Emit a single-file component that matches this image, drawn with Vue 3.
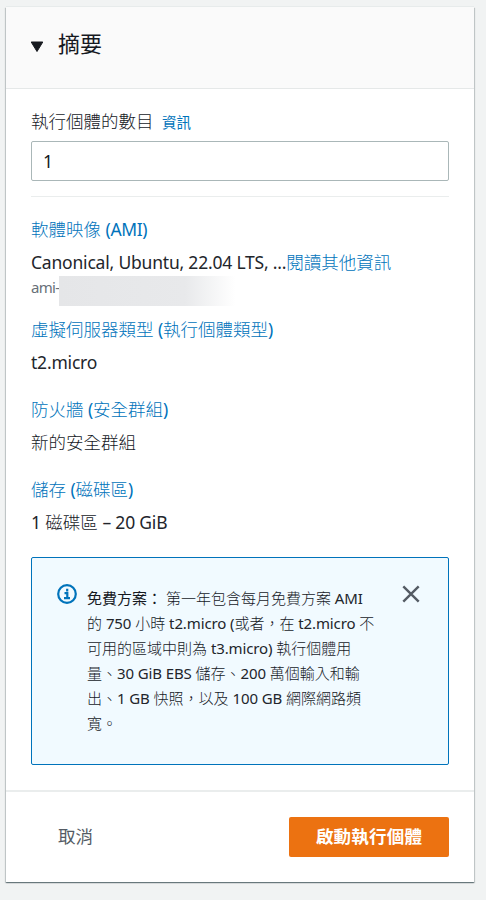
<script setup>
import { ref } from 'vue'

const count = ref('1')
</script>

<template>
  <main class="page">
    <section class="card">
      <header class="head">
        <svg class="caret" width="14" height="12" viewBox="0 0 14 12"><path d="M1.2 1h11.6L7 10.5z" fill="#16191f" stroke="#16191f" stroke-linejoin="round" /></svg>
        <h2>摘要</h2>
      </header>

      <div class="body">
        <div class="label">執行個體的數目 <a class="info">資訊</a></div>
        <input v-model="count" class="field" type="text" />
        <div class="rule"></div>

        <div class="group ami">
          <a class="title">軟體映像 <b>(AMI)</b></a>
          <div class="value"><span class="en">Canonical, Ubuntu, 22.04 LTS, ...</span><a>閱讀其他資訊</a></div>
          <div class="id"><span class="prefix">ami-</span><span class="mask"></span></div>
        </div>
        <div class="group">
          <a class="title">虛擬伺服器類型 <b>(</b>執行個體類型<b>)</b></a>
          <div class="value"><span class="en">t2.micro</span></div>
        </div>
        <div class="group">
          <a class="title">防火牆 <b>(</b>安全群組<b>)</b></a>
          <div class="value">新的安全群組</div>
        </div>
        <div class="group">
          <a class="title">儲存 <b>(</b>磁碟區<b>)</b></a>
          <div class="value"><span class="en">1</span> 磁碟區 <span class="en">– 20 GiB</span></div>
        </div>

        <div class="alert">
          <svg class="icon" width="20" height="20" viewBox="0 0 20 20" fill="none" stroke="#0073bb">
            <circle cx="10" cy="10" r="8.8" stroke-width="2.2" />
            <path d="M10.2 4.8v2.6M7.5 9.2h2.8v5M7 14.2h6" stroke-width="2.2" />
          </svg>
          <p class="text">
            <span class="line"><strong>免費方案：</strong> 第一年包含每月免費方案 <i>AMI</i></span>
            <span class="line">的 <i>750</i> 小時 <i>t2.micro (</i>或者，在 <i>t2.micro</i> 不</span>
            <span class="line">可用的區域中則為 <i>t3.micro)</i> 執行個體用</span>
            <span class="line">量、<i>30 GiB EBS</i> 儲存、<i>200</i> 萬個輸入和輸</span>
            <span class="line">出、<i>1 GB</i> 快照，以及 <i>100 GB</i> 網際網路頻</span>
            <span class="line">寬。</span>
          </p>
          <svg class="close" width="18" height="18" viewBox="0 0 18 18" fill="none" stroke="#545b64" stroke-width="2.4"><path d="M1.3 1.3l15.4 15.4M16.7 1.3L1.3 16.7" /></svg>
        </div>
      </div>

      <footer class="foot">
        <button class="cancel">取消</button>
        <button class="launch">啟動執行個體</button>
      </footer>
    </section>
  </main>
</template>

<style>
body {
  background: #f2f3f3;
}
</style>

<style scoped>
.page {
  box-sizing: border-box;
  height: 900px;
  padding: 7px 12px 18px 6px;
  background: #f1f3f3;
  font-family: "Noto Sans", "Noto Sans CJK TC", sans-serif;
  font-size: 17.5px;
  color: #16191f;
}
.card {
  display: flex;
  flex-direction: column;
  box-sizing: border-box;
  width: 468px;
  height: 875px;
  background: #fff;
  box-shadow: 0 1px 1px 0 rgba(0, 28, 36, 0.4), 1px 1px 1px 0 rgba(0, 28, 36, 0.15), -1px 1px 1px 0 rgba(0, 28, 36, 0.15), 0 -1px 0 0 #e7ebeb;
}
.head {
  display: flex;
  align-items: center;
  box-sizing: border-box;
  height: 82px;
  padding: 0 24px 9px;
  background: #fafafa;
  border-bottom: 1px solid #e5e8e8;
}
.caret {
  margin-top: 7px;
}
h2 {
  margin: 0 0 0 14px;
  font-size: 22px;
  line-height: 28px;
  font-weight: 400;
}
.body {
  flex: 1;
  padding: 19px 25px 0;
  font-weight: 300;
}
a {
  color: #0073bb;
}
.label {
  height: 33px;
  line-height: 27px;
}
.info {
  margin-left: 4px;
  font-size: 14.5px;
  font-weight: 400;
}
.field {
  display: block;
  box-sizing: border-box;
  width: 418px;
  height: 40px;
  padding: 0 11px 1px;
  border: 1px solid #aab7b8;
  border-radius: 2px;
  font: 400 17.5px "Noto Sans", sans-serif;
  color: #16191f;
  outline: none;
}
.rule {
  height: 1px;
  margin-top: 15px;
  background: #eaeded;
}
.group {
  height: 80px;
}
.ami {
  height: 100px;
  margin-top: 19px;
}
.title {
  display: block;
  height: 33px;
  line-height: 27px;
  white-space: nowrap;
}
.title b {
  font-weight: 400;
  letter-spacing: -0.4px;
}
.value {
  height: 27px;
  line-height: 27px;
  white-space: nowrap;
}
.en {
  font-weight: 400;
  letter-spacing: -0.2px;
  color: #22252b;
}
.id {
  display: flex;
  height: 30px;
  font-size: 15px;
  line-height: 22px;
  font-weight: 400;
  color: #687078;
}
.prefix {
  width: 28px;
  letter-spacing: -0.7px;
}
.mask {
  width: 180px;
  height: 30px;
  background: linear-gradient(90deg, #e5e6e8, #e8e9eb 70%, #fff 98%);
}
.alert {
  display: flex;
  box-sizing: border-box;
  height: 208px;
  margin-top: 1px;
  padding: 26px 28px 0 25px;
  background: #f1faff;
  border: 1px solid #0073bb;
  border-radius: 2px;
}
.icon {
  flex: none;
}
.text {
  flex: 1;
  margin: 2px 0 0 10px;
  font-size: 15px;
}
.line {
  display: block;
  height: 25px;
  line-height: 25px;
  white-space: nowrap;
}
.line strong {
  font-weight: 400;
}
.line i {
  font-style: normal;
  font-weight: 400;
  letter-spacing: -0.12px;
  color: #22252b;
}
.close {
  flex: none;
  margin-top: 1px;
}
.foot {
  display: flex;
  align-items: center;
  justify-content: space-between;
  box-sizing: border-box;
  height: 92px;
  padding: 0 25px;
  border-top: 2px solid #eaeded;
}
button {
  height: 40px;
  padding: 0 27px 4px;
  border: 0;
  border-radius: 2px;
  background: none;
  font: 700 17.5px "Noto Sans CJK TC", sans-serif;
  white-space: nowrap;
}
.cancel {
  font-weight: 400;
  color: #545b64;
}
.launch {
  width: 160px;
  padding: 0 0 4px;
  background: #ec7211;
  color: #fff;
  letter-spacing: 0.2px;
}
</style>
